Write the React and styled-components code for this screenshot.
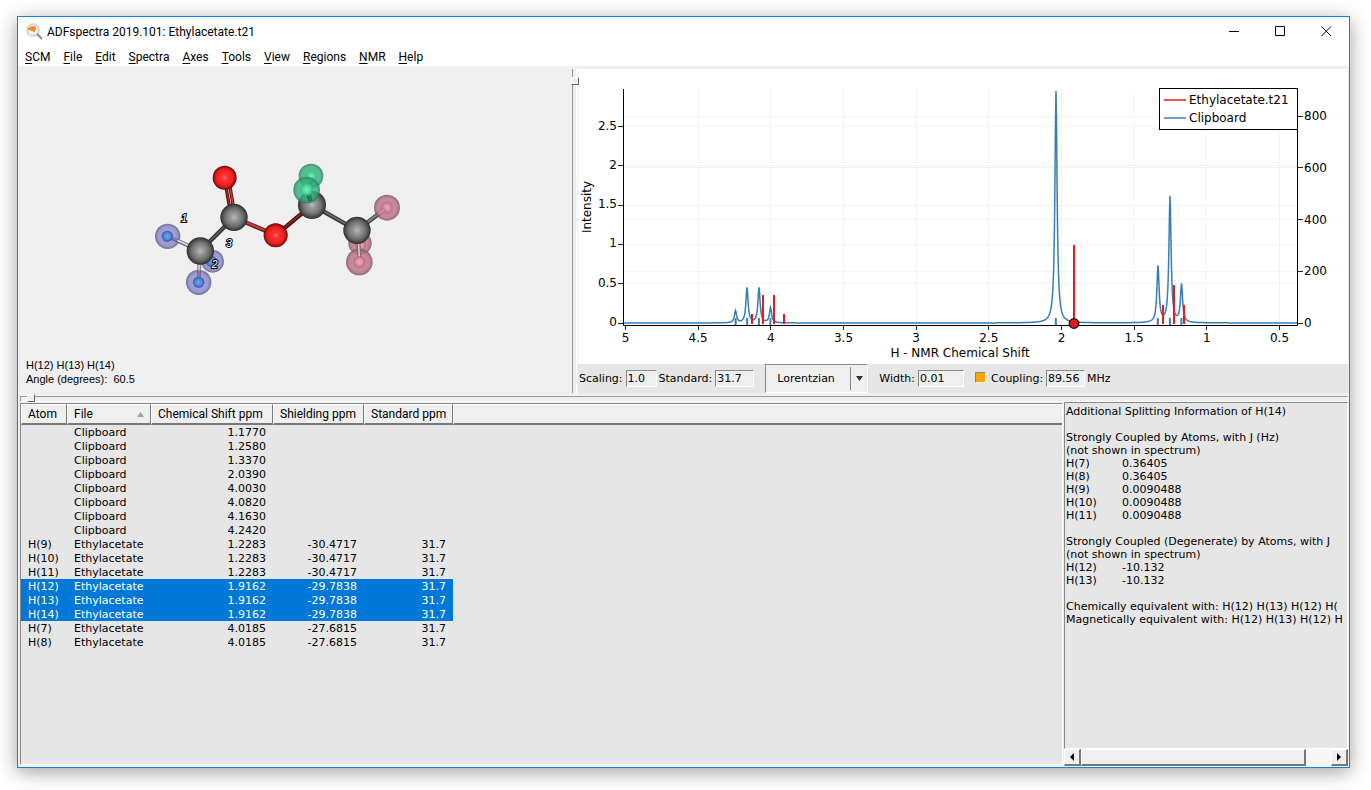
import styled, { createGlobalStyle } from 'styled-components';

const UI_FONT = 'Roboto, "Noto Sans", sans-serif';
const DATA_FONT = '"DejaVu Sans", sans-serif';

const menus = ['SCM', 'File', 'Edit', 'Spectra', 'Axes', 'Tools', 'View', 'Regions', 'NMR', 'Help'];

const rows = [
    { file: 'Clipboard', shift: '1.1770' },
    { file: 'Clipboard', shift: '1.2580' },
    { file: 'Clipboard', shift: '1.3370' },
    { file: 'Clipboard', shift: '2.0390' },
    { file: 'Clipboard', shift: '4.0030' },
    { file: 'Clipboard', shift: '4.0820' },
    { file: 'Clipboard', shift: '4.1630' },
    { file: 'Clipboard', shift: '4.2420' },
    { atom: 'H(9)', file: 'Ethylacetate', shift: '1.2283', shielding: '-30.4717', standard: '31.7' },
    { atom: 'H(10)', file: 'Ethylacetate', shift: '1.2283', shielding: '-30.4717', standard: '31.7' },
    { atom: 'H(11)', file: 'Ethylacetate', shift: '1.2283', shielding: '-30.4717', standard: '31.7' },
    { atom: 'H(12)', file: 'Ethylacetate', shift: '1.9162', shielding: '-29.7838', standard: '31.7', selected: true },
    { atom: 'H(13)', file: 'Ethylacetate', shift: '1.9162', shielding: '-29.7838', standard: '31.7', selected: true },
    { atom: 'H(14)', file: 'Ethylacetate', shift: '1.9162', shielding: '-29.7838', standard: '31.7', selected: true },
    { atom: 'H(7)', file: 'Ethylacetate', shift: '4.0185', shielding: '-27.6815', standard: '31.7' },
    { atom: 'H(8)', file: 'Ethylacetate', shift: '4.0185', shielding: '-27.6815', standard: '31.7' },
];

const splitting = [
    ['Additional Splitting Information of H(14)'],
    [],
    ['Strongly Coupled by Atoms, with J (Hz)'],
    ['(not shown in spectrum)'],
    ['H(7)', '0.36405'],
    ['H(8)', '0.36405'],
    ['H(9)', '0.0090488'],
    ['H(10)', '0.0090488'],
    ['H(11)', '0.0090488'],
    [],
    ['Strongly Coupled (Degenerate) by Atoms, with J'],
    ['(not shown in spectrum)'],
    ['H(12)', '-10.132'],
    ['H(13)', '-10.132'],
    [],
    ['Chemically equivalent with: H(12) H(13) H(12) H('],
    ['Magnetically equivalent with: H(12) H(13) H(12) H'],
];

// plot scales
const px = (ppm) => 47.5 + (5 - ppm) * 145.33;
const py = (v) => 254 - v * 78.6;
const py2 = (v) => 254 - v * 0.2585;
const crisp = (v) => Math.floor(v) + 0.5;

// [ppm, height]
const peaks = [
    [4.242, 12], [4.163, 35], [4.082, 35], [4.003, 15],
    [2.039, 232], [1.337, 56], [1.254, 126], [1.175, 38],
];
const sticks = [
    [4.131, 9], [4.053, 28], [3.977, 28], [3.909, 9],
    [1.914, 78], [1.302, 18], [1.227, 38], [1.156, 18],
];
const HALF_WIDTH = 1.3;

const curve = () => {
    const points = [];
    for (let x = 46; x <= 719; x += 0.5) {
        let h = 0;
        peaks.forEach(([ppm, height]) => {
            const d = x - Math.round(px(ppm) * 2) / 2;
            h += (height * HALF_WIDTH ** 2) / (HALF_WIDTH ** 2 + d * d);
        });
        points.push(`${x},${(254 - h).toFixed(2)}`);
    }
    return points.join(' ');
};

const Spectrum = () => (
    <Plot viewBox="0 0 770 295" role="img" aria-label="H - NMR spectrum">
        {[4.5, 4, 3.5, 3, 2.5, 2, 1.5, 1, 0.5].map((v) => (
            <line key={v} x1={crisp(px(v))} x2={crisp(px(v))} y1="20" y2="256" stroke="#f2f2f2" />
        ))}
        {[0.5, 1, 1.5, 2, 2.5].map((v) => (
            <line key={v} x1="46" x2="719" y1={crisp(py(v))} y2={crisp(py(v))} stroke="#f2f2f2" />
        ))}
        {[200, 400, 600, 800].map((v) => (
            <line key={v} x1="46" x2="719" y1={crisp(py2(v))} y2={crisp(py2(v))} stroke="#f2f2f2" />
        ))}
        <path d="M45.5 20V256.5H719.5V20" fill="none" stroke="#000" />
        {[5, 4.5, 4, 3.5, 3, 2.5, 2, 1.5, 1, 0.5].map((v) => (
            <g key={v}>
                <line x1={crisp(px(v))} x2={crisp(px(v))} y1="256" y2="261" stroke="#222" />
                <text x={px(v)} y="273" textAnchor="middle">{v}</text>
            </g>
        ))}
        {[0, 0.5, 1, 1.5, 2, 2.5].map((v) => (
            <g key={v}>
                <line x1="40" x2="45" y1={crisp(py(v))} y2={crisp(py(v))} stroke="#222" />
                <text x="39" y={py(v) + 3} textAnchor="end">{v}</text>
            </g>
        ))}
        {[0, 200, 400, 600, 800].map((v) => (
            <g key={v}>
                <line x1="720" x2="725" y1={crisp(py2(v))} y2={crisp(py2(v))} stroke="#222" />
                <text x="726" y={py2(v) + 4}>{v}</text>
            </g>
        ))}
        <text x="382" y="288" textAnchor="middle">H - NMR Chemical Shift</text>
        <text transform="translate(13 138) rotate(-90)" textAnchor="middle">Intensity</text>
        <polyline points={curve()} fill="none" stroke="#377eb8" strokeWidth="1.5" />
        {peaks.map(([ppm]) => (
            <line key={ppm} x1={px(ppm)} x2={px(ppm)} y1="249" y2="256" stroke="#377eb8" strokeWidth="2" />
        ))}
        {sticks.map(([ppm, h]) => (
            <line key={ppm} x1={Math.round(px(ppm))} x2={Math.round(px(ppm))} y1={254 - h} y2="255" stroke="#e41a1c" strokeWidth="2" />
        ))}
        <circle cx={px(1.914)} cy="254.5" r="4.8" fill="#e41a1c" stroke="#111" strokeWidth="1.3" />
        <rect x="581.5" y="19.5" width="138" height="41" fill="#fff" stroke="#000" />
        <line x1="586" x2="608" y1="31" y2="31" stroke="#e41a1c" strokeWidth="1.5" />
        <line x1="586" x2="608" y1="49" y2="49" stroke="#377eb8" strokeWidth="1.5" />
        <text x="611" y="35">Ethylacetate.t21</text>
        <text x="611" y="53">Clipboard</text>
    </Plot>
);

const Ball = ({ x, y, r, kind }) => <circle cx={x} cy={y} r={r} fill={`url(#${kind})`} />;

const Bond = ({ from, to, dark, light, width = 13 }) => (
    <g strokeLinecap="butt">
        <line x1={from[0]} y1={from[1]} x2={to[0]} y2={to[1]} stroke={dark} strokeWidth={width} />
        <line x1={from[0]} y1={from[1] - 1} x2={to[0]} y2={to[1] - 1} stroke={light} strokeWidth={width / 2.5} />
    </g>
);

const Shade = ({ id, stops }) => (
    <radialGradient id={id}>
        {stops.map(([offset, color, opacity = 1]) => (
            <stop key={offset} offset={offset} stopColor={color} stopOpacity={opacity} />
        ))}
    </radialGradient>
);

const Molecule = () => (
    <Scene viewBox="0 0 553 289" role="img" aria-label="Ethyl acetate molecule">
        <defs>
            <Shade id="carbon" stops={[[0, '#bcbcbc'], [0.2, '#a0a0a0'], [0.65, '#707070'], [0.9, '#444'], [1, '#262626']]} />
            <Shade id="oxygen" stops={[[0, '#ff6464'], [0.25, '#ff3232'], [0.7, '#ee1e1e'], [0.9, '#a01212'], [1, '#500808']]} />
            <Shade id="blueHalo" stops={[[0, '#9a9ae0', 0.85], [0.75, '#8c8ccc', 0.85], [1, '#62628a', 0.9]]} />
            <Shade id="blueCore" stops={[[0, '#67a9f2'], [0.6, '#4c87d6'], [1, '#4254a0']]} />
            <Shade id="greenHalo" stops={[[0, '#3cc78c', 0.85], [0.75, '#2fae7a', 0.8], [1, '#257f5c', 0.85]]} />
            <Shade id="greenCore" stops={[[0, '#6ff0b8'], [0.6, '#50d89c'], [1, '#36b27c', 0.7]]} />
            <Shade id="pinkHalo" stops={[[0, '#d2889c', 0.9], [0.75, '#b87688', 0.85], [1, '#80525f', 0.85]]} />
            <Shade id="pinkCore" stops={[[0, '#f0a8bc'], [0.6, '#d98ca2'], [1, '#a8606f', 0.7]]} />
        </defs>
        <g transform="translate(122 81) scale(0.3333)">
            <Ball x={218} y={334} r={34} kind="blueHalo" />
            <Ball x={214} y={334} r={17} kind="blueCore" />
            <Ball x={660} y={280} r={35} kind="pinkHalo" />
            <Ball x={662} y={286} r={16} kind="pinkCore" />
            <Bond from={[256, 100]} to={[270, 180]} dark="#5d1414" light="#a03030" width={10} />
            <Bond from={[268, 100]} to={[282, 180]} dark="#5d1414" light="#d23c3c" width={10} />
            <Bond from={[282, 202]} to={[181, 303]} dark="#333" light="#5c5c5c" />
            <Bond from={[282, 202]} to={[407, 256]} dark="#761c1c" light="#c44" />
            <Bond from={[407, 256]} to={[516, 165]} dark="#4d1313" light="#822" />
            <Bond from={[516, 165]} to={[651, 241]} dark="#3a3a3a" light="#6c6c6c" />
            <Bond from={[651, 241]} to={[741, 173]} dark="#4a4a4a" light="#888" />
            <Ball x={83} y={259} r={38} kind="blueHalo" />
            <Ball x={741} y={173} r={39} kind="pinkHalo" />
            <Ball x={741} y={173} r={18} kind="pinkCore" />
            <Bond from={[717, 191]} to={[738, 176]} dark="#b87488" light="#dc98aa" width={11} />
            <Bond from={[110, 271]} to={[181, 303]} dark="#777" light="#ddd" width={12} />
            <Bond from={[92, 263]} to={[112, 272]} dark="#5c5c86" light="#8f8fba" width={10} />
            <Ball x={82} y={259} r={17} kind="blueCore" />
            <Ball x={176} y={397} r={38} kind="blueHalo" />
            <Bond from={[180, 303]} to={[177, 364]} dark="#888" light="#ccc" width={12} />
            <Bond from={[177, 362]} to={[177, 386]} dark="#5c5c86" light="#8f8fba" width={10} />
            <Ball x={176} y={397} r={17} kind="blueCore" />
            <Ball x={254} y={83} r={36} kind="oxygen" />
            <Ball x={282} y={202} r={41} kind="carbon" />
            <Ball x={181} y={303} r={41} kind="carbon" />
            <Ball x={407} y={256} r={36} kind="oxygen" />
            <Ball x={516} y={165} r={42} kind="carbon" />
            <Ball x={513} y={78} r={37} kind="greenHalo" />
            <Bond from={[514, 80]} to={[510, 128]} dark="#168056" light="#1d9a68" width={11} />
            <Ball x={514} y={78} r={16} kind="greenCore" />
            <Ball x={500} y={120} r={40} kind="greenHalo" />
            <Bond from={[500, 122]} to={[512, 152]} dark="#126a48" light="#1f8a60" width={12} />
            <Ball x={500} y={119} r={19} kind="greenCore" />
            <Ball x={658} y={336} r={40} kind="pinkHalo" />
            <Bond from={[655, 262]} to={[658, 322]} dark="#8a6870" light="#ddc4ca" width={12} />
            <Ball x={658} y={336} r={18} kind="pinkCore" />
            <Ball x={651} y={241} r={41} kind="carbon" />
            <AtomLabel x={133} y={217}>1</AtomLabel>
            <AtomLabel x={267} y={292}>3</AtomLabel>
            <AtomLabel x={224} y={355}>2</AtomLabel>
        </g>
    </Scene>
);

const Logo = () => (
    <svg width="18" height="18" viewBox="0 0 18 18" aria-hidden="true">
        <circle cx="7" cy="7" r="6" fill="#f4f1ee" stroke="#cfcfcf" strokeWidth="1.6" />
        <path d="M1.500 5.500 5 3.500H9V9.500L6.500 8 2.500 7Z" fill="#ff8420" />
        <circle cx="7.5" cy="5.5" r="2.5" fill="#ff8c2a" />
        <path d="M11 11l5 5" stroke="#8c8c8c" strokeWidth="2" />
    </svg>
);

const App = () => {
    return (
        <>
            <GlobalStyle />
            <Window>
                <TitleBar>
                    <Logo />
                    <h1>ADFspectra 2019.101: Ethylacetate.t21</h1>
                    <WindowButton aria-label="Minimize"><svg width="10" height="11"><path d="M0 5.5H10" /></svg></WindowButton>
                    <WindowButton aria-label="Maximize"><svg width="11" height="11"><path d="M.5.5H9.5V9.5H.5Z" /></svg></WindowButton>
                    <WindowButton aria-label="Close"><svg width="11" height="11"><path d="M.5.5 10 10M10 .5.5 10" /></svg></WindowButton>
                </TitleBar>
                <MenuBar>
                    {menus.map((name) => (
                        <button key={name}><u>{name[0]}</u>{name.slice(1)}</button>
                    ))}
                </MenuBar>
                <Upper>
                    <Viewer>
                        <Molecule />
                        <p>H(12) H(13) H(14)<br />Angle (degrees): &nbsp;60.5</p>
                    </Viewer>
                    <VerticalSash><SashHandle $top="8px" $left="0" /></VerticalSash>
                    <Graph>
                        <Spectrum />
                        <Toolbar>
                            <label htmlFor="scaling">Scaling:</label>
                            <Field id="scaling" $width="31px" $gap="2px" defaultValue="1.0" />
                            <label htmlFor="standard">Standard:</label>
                            <Field id="standard" $width="39px" $gap="11px" defaultValue="31.7" />
                            <Combo>
                                <select aria-label="Line shape" defaultValue="Lorentzian">
                                    <option>Lorentzian</option>
                                    <option>Gaussian</option>
                                </select>
                                <i><svg width="7" height="6"><path d="M0 0H7L3.5 5Z" fill="#333" /></svg></i>
                            </Combo>
                            <label htmlFor="width">Width:</label>
                            <Field id="width" $width="46px" $gap="11px" defaultValue="0.01" />
                            <Check id="use-coupling" type="checkbox" defaultChecked />
                            <label htmlFor="use-coupling">Coupling:</label>
                            <Field aria-label="Coupling in MHz" $width="39px" $gap="2px" defaultValue="89.56" />
                            <span>MHz</span>
                        </Toolbar>
                    </Graph>
                </Upper>
                <HorizontalSash><SashHandle $top="1px" $left="9px" /></HorizontalSash>
                <Lower>
                    <TableFrame>
                        <PeakTable>
                            <colgroup>
                                <col width="46" /><col width="84" /><col width="122" /><col width="91" /><col width="89" /><col />
                            </colgroup>
                            <thead>
                                <tr>
                                    <th>Atom</th>
                                    <th><Sorted>File<svg width="7" height="5"><path d="M3.5 0 7 5H0Z" fill="#a0a0a0" /></svg></Sorted></th>
                                    <th>Chemical Shift ppm</th>
                                    <th>Shielding ppm</th>
                                    <th>Standard ppm</th>
                                    <th></th>
                                </tr>
                            </thead>
                            <tbody>
                                {rows.map((row, i) => (
                                    <Row key={i} $selected={row.selected}>
                                        <td>{row.atom}</td>
                                        <td>{row.file}</td>
                                        <td>{row.shift}</td>
                                        <td>{row.shielding}</td>
                                        <td>{row.standard}</td>
                                    </Row>
                                ))}
                            </tbody>
                        </PeakTable>
                    </TableFrame>
                    <Side>
                        <Info>
                            {splitting.map(([text, value], i) => (
                                <Line key={i}>{value ? <><b>{text}</b>{value}</> : text}</Line>
                            ))}
                        </Info>
                        <ScrollBar>
                            <ScrollButton aria-label="Scroll left"><svg width="4" height="8"><path d="M4 0V8L0 4Z" /></svg></ScrollButton>
                            <Trough><Thumb /></Trough>
                            <ScrollButton aria-label="Scroll right"><svg width="4" height="8"><path d="M0 0V8L4 4Z" /></svg></ScrollButton>
                        </ScrollBar>
                    </Side>
                </Lower>
            </Window>
        </>
    );
};

const GlobalStyle = createGlobalStyle`
    * {
        box-sizing: border-box;
    }
    body {
        margin: 0;
        background: #fff;
        color: #000;
    }
    button, input, select {
        margin: 0;
        border-radius: 0;
        color: inherit;
        font: inherit;
    }
`;

const Window = styled.div`
    display: flex;
    flex-direction: column;
    min-height: calc(100vh - 38px);
    margin: 16px 21px 22px 17px;
    border: 1px solid #1c7fd1;
    background: #efefef;
    box-shadow: 0 4px 18px rgba(0, 0, 0, 0.38);
    font-family: ${UI_FONT};
    font-size: 12px;
`;

const TitleBar = styled.header`
    display: flex;
    align-items: center;
    height: 29px;
    padding-left: 8px;
    background: #fff;
    h1 {
        flex: 1;
        margin: 0 0 0 3px;
        font-size: 12px;
        font-weight: normal;
    }
`;

const WindowButton = styled.button`
    display: flex;
    align-items: center;
    justify-content: center;
    width: 46px;
    height: 29px;
    padding: 0;
    border: 0;
    background: none;
    path {
        fill: none;
        stroke: #000;
    }
`;

const MenuBar = styled.nav`
    display: flex;
    gap: 13px;
    height: 20px;
    padding-left: 7px;
    background: #fff;
    button {
        padding: 0;
        border: 0;
        background: none;
        line-height: 22px;
    }
    u {
        text-underline-offset: 2px;
    }
`;

const Upper = styled.section`
    display: grid;
    grid-template-columns: minmax(0, 553fr) 7px minmax(0, 770fr);
    padding: 3px 1px 0 0;
`;

const Viewer = styled.div`
    p {
        margin: 0 8px;
        font-family: "Liberation Sans", sans-serif;
        font-size: 11px;
        line-height: 14px;
    }
`;

const Scene = styled.svg`
    display: block;
    width: 100%;
`;

const AtomLabel = styled.text`
    fill: #fff;
    stroke: #000;
    stroke-width: 6px;
    paint-order: stroke;
    font-family: "Liberation Sans", sans-serif;
    font-size: 32px;
    font-style: italic;
    text-anchor: middle;
`;

const VerticalSash = styled.div`
    position: relative;
    &::before {
        content: '';
        display: block;
        width: 3px;
        height: 100%;
        margin-left: 1px;
        border-left: 1px solid #999;
        border-right: 1px solid #fff;
    }
`;

const HorizontalSash = styled.div`
    position: relative;
    height: 9px;
    padding: 3px 1px 0 2px;
    &::before {
        content: '';
        display: block;
        height: 4px;
        border: 1px solid #fff;
        border-top-color: #999;
        border-left-color: #999;
    }
`;

const SashHandle = styled.span`
    position: absolute;
    top: ${(props) => props.$top};
    left: ${(props) => props.$left};
    width: 8px;
    height: 8px;
    border: 1px solid #fff;
    border-right-color: #666;
    border-bottom-color: #666;
    background: #efefef;
`;

const Graph = styled.div`
    background: #fff;
`;

const Plot = styled.svg`
    display: block;
    width: 100%;
    text {
        font-family: ${DATA_FONT};
        font-size: 12px;
    }
`;

const Toolbar = styled.div`
    display: flex;
    align-items: center;
    height: 29px;
    padding-left: 1px;
    background: #e6e6e6;
    font-family: ${DATA_FONT};
    font-size: 11px;
`;

const Field = styled.input`
    width: ${(props) => props.$width};
    height: 17px;
    margin: 0 ${(props) => props.$gap} 0 3px;
    padding: 0 1px;
    border: 1px solid #fff;
    border-top-color: #888;
    border-left-color: #888;
    background: #efefef;
`;

const Combo = styled.div`
    position: relative;
    width: 103px;
    height: 29px;
    margin-right: 11px;
    select {
        width: 100%;
        height: 100%;
        padding: 0 0 0 11px;
        appearance: none;
        border: 1px solid #fff;
        border-top-color: #888;
        border-left-color: #888;
        background: #efefef;
    }
    i {
        position: absolute;
        top: 3px;
        right: 1px;
        bottom: 3px;
        display: flex;
        align-items: center;
        justify-content: center;
        width: 17px;
        border-left: 1px solid #888;
        pointer-events: none;
    }
`;

const Check = styled.input`
    width: 11px;
    height: 11px;
    margin: 0 5px 2px 0;
    appearance: none;
    border: 1px solid #fff;
    border-top-color: #888;
    border-left-color: #888;
    background: #ffa500;
`;

const Lower = styled.section`
    display: grid;
    flex: 1;
    grid-template-columns: minmax(0, 1043fr) minmax(0, 284fr);
    gap: 1px;
    padding: 0 1px 0 2px;
`;

const TableFrame = styled.div`
    margin: 1px 0 2px;
    border: 1px solid #fff;
    border-top-color: #888;
    border-left-color: #888;
    background: #e6e6e6;
`;

const PeakTable = styled.table`
    width: 100%;
    table-layout: fixed;
    border-collapse: separate;
    border-spacing: 0;
    th {
        height: 21px;
        padding: 1px 6px 0;
        border: 1px solid #fff;
        border-right-color: #777;
        border-bottom: 2px solid #777;
        background: #efefef;
        font-weight: normal;
        line-height: 17px;
        text-align: left;
        white-space: nowrap;
    }
    th:last-child {
        border-right: 0;
    }
`;

const Sorted = styled.span`
    display: flex;
    align-items: center;
    justify-content: space-between;
`;

const Row = styled.tr`
    td {
        height: 14px;
        padding: 2px 7px 0;
        background: ${(props) => (props.$selected ? '#0078d7' : 'transparent')};
        color: ${(props) => (props.$selected ? '#fff' : '#000')};
        font-family: ${DATA_FONT};
        font-size: 11px;
        line-height: 12px;
        text-align: right;
    }
    td:nth-child(1), td:nth-child(2) {
        text-align: left;
    }
`;

const Side = styled.aside`
    display: flex;
    flex-direction: column;
    min-width: 0;
`;

const Info = styled.div`
    flex: 1;
    overflow: hidden;
    padding: 2px 1px;
    border: 1px solid #fff;
    border-top-color: #888;
    border-left-color: #888;
    background: #e6e6e6;
    font-family: ${DATA_FONT};
    font-size: 11px;
`;

const Line = styled.div`
    height: 13px;
    line-height: 13px;
    white-space: nowrap;
    b {
        display: inline-block;
        width: 56px;
        font-weight: normal;
    }
`;

const ScrollBar = styled.div`
    display: flex;
    height: 18px;
`;

const ScrollButton = styled.button`
    display: flex;
    align-items: center;
    justify-content: center;
    width: 17px;
    height: 17px;
    padding: 0;
    border: 1px solid #fff;
    border-right: 2px solid #777;
    border-bottom: 2px solid #777;
    background: #efefef;
`;

const Trough = styled.div`
    flex: 1;
    background: #f6f6f6;
`;

const Thumb = styled.div`
    width: 90%;
    height: 17px;
    border: 1px solid #fff;
    border-right: 2px solid #777;
    border-bottom: 2px solid #777;
    background: #efefef;
`;

export default App;
